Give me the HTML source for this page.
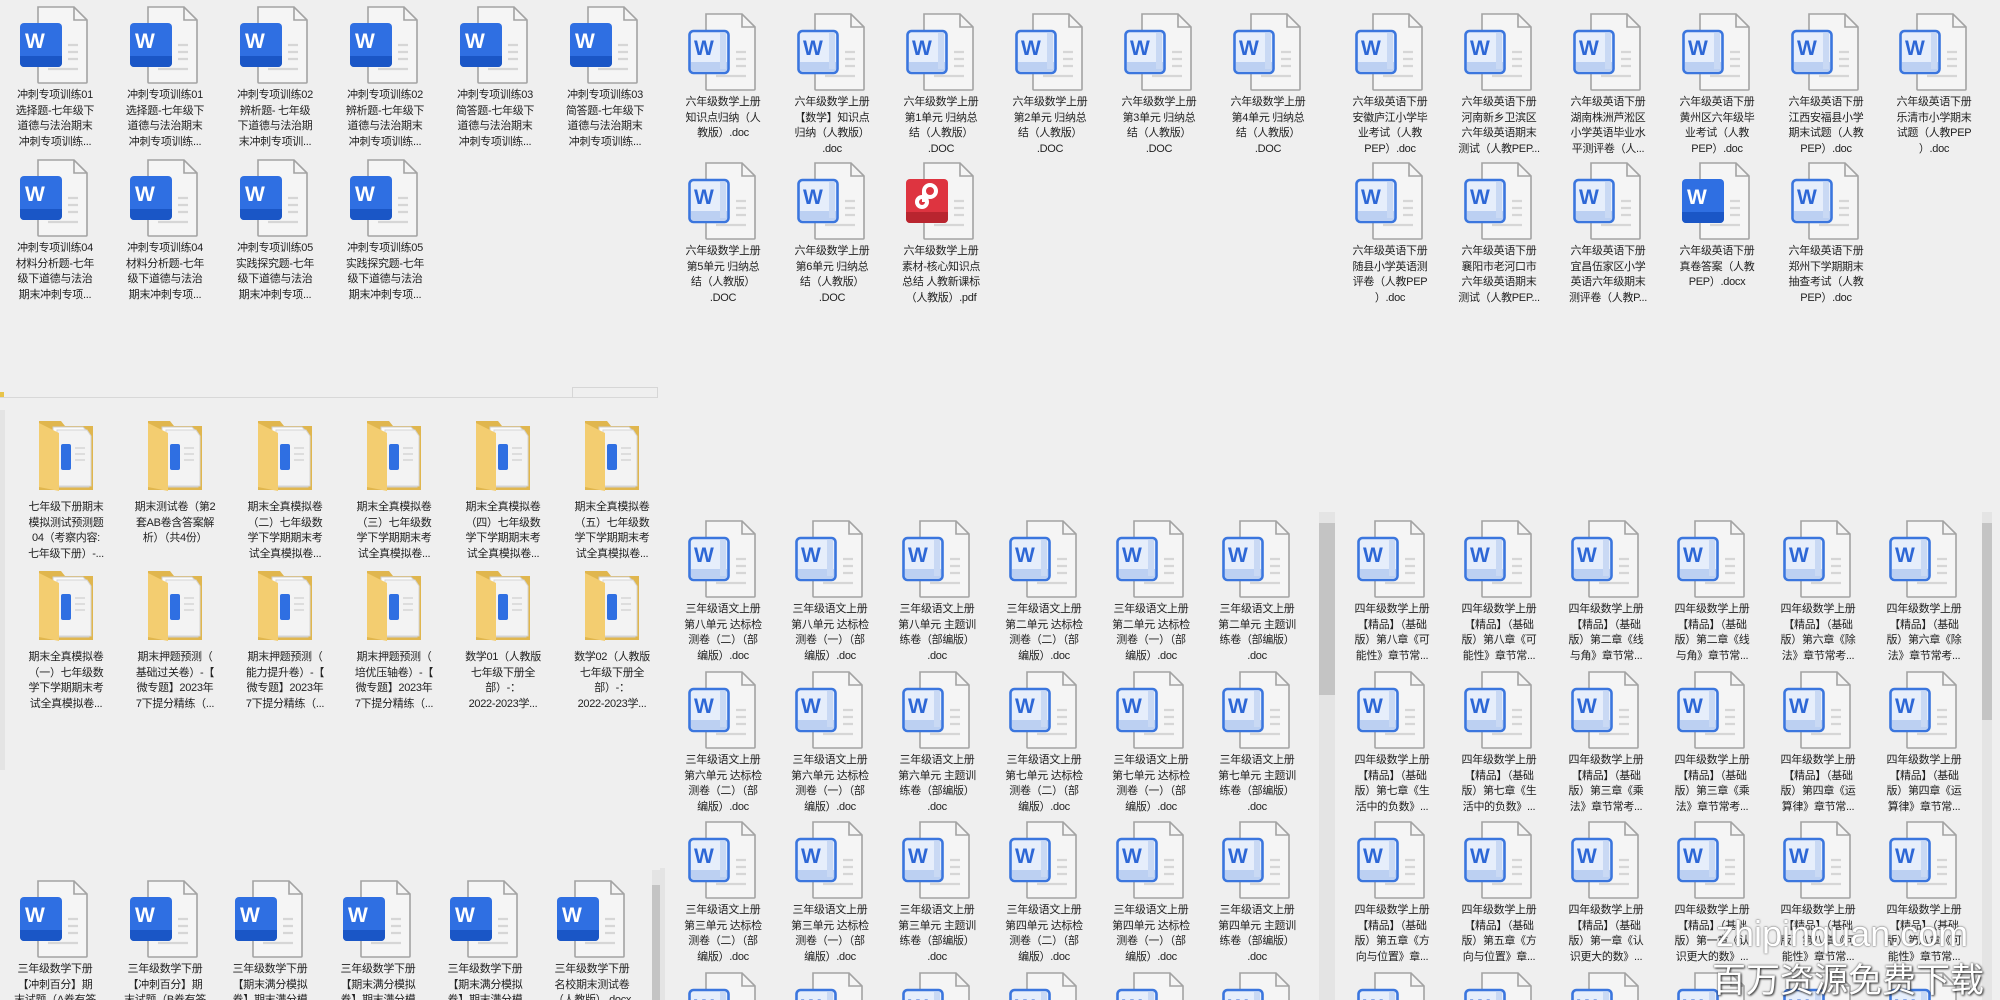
<!DOCTYPE html>
<html><head><meta charset="utf-8">
<style>
html{margin:0;padding:0;width:2000px;height:1000px;overflow:hidden}
body{margin:0;padding:0;width:2000px;height:1000px;overflow:hidden;background:#efefef;position:relative;font-family:"Liberation Sans","Noto Sans CJK SC",sans-serif}
.i{position:absolute;width:110px}
.i svg{display:block;width:70px;height:78px;margin:0 auto}
.i p{margin:4px 0 0;font-size:11px;letter-spacing:-0.3px;line-height:15.5px;text-align:center;color:#222;white-space:nowrap}
.sb{position:absolute;background:#e4e4e4}
.th{position:absolute;background:#c4c4c4}
.wm1{position:absolute;left:1716px;top:912px;font-size:36px;line-height:44px;color:#fff;white-space:nowrap;text-shadow:0 0 2px #777,0 0 1px #555}
.wm2{position:absolute;left:1712px;top:956px;font-size:34px;line-height:44px;color:#fff;white-space:nowrap;text-shadow:1px 1px 2px #333,0 0 2px #444;font-family:"Noto Sans CJK SC",sans-serif}
</style></head><body>
<svg width="0" height="0" style="position:absolute">
<defs>
<symbol id="doc" viewBox="0 0 70 78">
<path d="M18 1h36l13 13v62a1 1 0 0 1-1 1H19a1 1 0 0 1-1-1z" fill="#f5f5f5" stroke="#a3a3a3" stroke-width="1.6"/>
<path d="M54 1v13h13" fill="none" stroke="#a3a3a3" stroke-width="1.6"/>
<path d="M48 39h10M48 46h10M48 53h10M28 63h30" stroke="#d6d6d6" stroke-width="2.2"/>
</symbol>
<symbol id="ws" viewBox="0 0 70 78">
<use href="#doc"/>
<rect x="0" y="17" width="42" height="44" rx="4" fill="#2f6fe2"/>
<path d="M0 50h42v7a4 4 0 0 1-4 4H4a4 4 0 0 1-4-4z" fill="#1a56c6"/>
<text x="5" y="42" font-family="Liberation Sans" font-weight="bold" font-size="21" fill="#fff">W</text>
</symbol>
<symbol id="wo" viewBox="0 0 70 78">
<use href="#doc"/>
<rect x="1.5" y="18" width="39" height="42" rx="4" fill="#e6eefb" stroke="#3b76de" stroke-width="2.6"/>
<path d="M3 49h36v7a3 3 0 0 1-3 3H6a3 3 0 0 1-3-3z" fill="#bcd0f2"/>
<path d="M32 20h6v36h-6z" fill="#c9d9f4"/>
<text x="6" y="42" font-family="Liberation Sans" font-weight="bold" font-size="21" fill="#2d67d6">W</text>
</symbol>
<symbol id="pdf" viewBox="0 0 70 78">
<use href="#doc"/>
<rect x="0" y="17" width="42" height="44" rx="4" fill="#de3440"/>
<path d="M0 50h42v7a4 4 0 0 1-4 4H4a4 4 0 0 1-4-4z" fill="#b9252f"/>
<circle cx="24" cy="29" r="6" fill="none" stroke="#fff" stroke-width="4"/>
<circle cx="16" cy="40" r="5" fill="none" stroke="#fff" stroke-width="4"/>
<path d="M18 29v11" stroke="#fff" stroke-width="4"/>
</symbol>
<symbol id="fd" viewBox="0 0 70 78">
<path d="M8 3h22l4 5h28v64H8z" fill="#e0b64e"/>
<path d="M22 9h30l6 6v54H22z" fill="#fbfbfb" stroke="#cfcfcf"/>
<path d="M26 12h30l4 6v50H26z" fill="#f3f3f3" stroke="#d5d5d5"/>
<rect x="30" y="26" width="10" height="26" rx="2" fill="#2f6fe2"/>
<path d="M44 30h10M44 36h10M44 42h10" stroke="#ddd" stroke-width="2"/>
<path d="M8 5l20 10v58l-20-4z" fill="#f3cd70"/>
</symbol>
</defs></svg>

<!-- top-left panel -->
<div class="i" style="left:0;top:6px"><svg><use href="#ws"/></svg><p>冲刺专项训练01<br>选择题-七年级下<br>道德与法治期末<br>冲刺专项训练...</p></div>
<div class="i" style="left:110px;top:6px"><svg><use href="#ws"/></svg><p>冲刺专项训练01<br>选择题-七年级下<br>道德与法治期末<br>冲刺专项训练...</p></div>
<div class="i" style="left:220px;top:6px"><svg><use href="#ws"/></svg><p>冲刺专项训练02<br>辨析题- 七年级<br>下道德与法治期<br>末冲刺专项训...</p></div>
<div class="i" style="left:330px;top:6px"><svg><use href="#ws"/></svg><p>冲刺专项训练02<br>辨析题-七年级下<br>道德与法治期末<br>冲刺专项训练...</p></div>
<div class="i" style="left:440px;top:6px"><svg><use href="#ws"/></svg><p>冲刺专项训练03<br>简答题-七年级下<br>道德与法治期末<br>冲刺专项训练...</p></div>
<div class="i" style="left:550px;top:6px"><svg><use href="#ws"/></svg><p>冲刺专项训练03<br>简答题-七年级下<br>道德与法治期末<br>冲刺专项训练...</p></div>
<div class="i" style="left:0;top:159px"><svg><use href="#ws"/></svg><p>冲刺专项训练04<br>材料分析题-七年<br>级下道德与法治<br>期末冲刺专项...</p></div>
<div class="i" style="left:110px;top:159px"><svg><use href="#ws"/></svg><p>冲刺专项训练04<br>材料分析题-七年<br>级下道德与法治<br>期末冲刺专项...</p></div>
<div class="i" style="left:220px;top:159px"><svg><use href="#ws"/></svg><p>冲刺专项训练05<br>实践探究题-七年<br>级下道德与法治<br>期末冲刺专项...</p></div>
<div class="i" style="left:330px;top:159px"><svg><use href="#ws"/></svg><p>冲刺专项训练05<br>实践探究题-七年<br>级下道德与法治<br>期末冲刺专项...</p></div>

<!-- top-middle panel -->
<div class="i" style="left:668px;top:13px"><svg><use href="#wo"/></svg><p>六年级数学上册<br>知识点归纳（人<br>教版）.doc</p></div>
<div class="i" style="left:777px;top:13px"><svg><use href="#wo"/></svg><p>六年级数学上册<br>【数学】知识点<br>归纳（人教版）<br>.doc</p></div>
<div class="i" style="left:886px;top:13px"><svg><use href="#wo"/></svg><p>六年级数学上册<br>第1单元 归纳总<br>结（人教版）<br>.DOC</p></div>
<div class="i" style="left:995px;top:13px"><svg><use href="#wo"/></svg><p>六年级数学上册<br>第2单元 归纳总<br>结（人教版）<br>.DOC</p></div>
<div class="i" style="left:1104px;top:13px"><svg><use href="#wo"/></svg><p>六年级数学上册<br>第3单元 归纳总<br>结（人教版）<br>.DOC</p></div>
<div class="i" style="left:1213px;top:13px"><svg><use href="#wo"/></svg><p>六年级数学上册<br>第4单元 归纳总<br>结（人教版）<br>.DOC</p></div>
<div class="i" style="left:668px;top:162px"><svg><use href="#wo"/></svg><p>六年级数学上册<br>第5单元 归纳总<br>结（人教版）<br>.DOC</p></div>
<div class="i" style="left:777px;top:162px"><svg><use href="#wo"/></svg><p>六年级数学上册<br>第6单元 归纳总<br>结（人教版）<br>.DOC</p></div>
<div class="i" style="left:886px;top:162px"><svg><use href="#pdf"/></svg><p>六年级数学上册<br>素材-核心知识点<br>总结 人教新课标<br>（人教版）.pdf</p></div>

<!-- top-right panel -->
<div class="i" style="left:1335px;top:13px"><svg><use href="#wo"/></svg><p>六年级英语下册<br>安徽庐江小学毕<br>业考试（人教<br>PEP）.doc</p></div>
<div class="i" style="left:1444px;top:13px"><svg><use href="#wo"/></svg><p>六年级英语下册<br>河南新乡卫滨区<br>六年级英语期末<br>测试（人教PEP...</p></div>
<div class="i" style="left:1553px;top:13px"><svg><use href="#wo"/></svg><p>六年级英语下册<br>湖南株洲芦淞区<br>小学英语毕业水<br>平测评卷（人...</p></div>
<div class="i" style="left:1662px;top:13px"><svg><use href="#wo"/></svg><p>六年级英语下册<br>黄州区六年级毕<br>业考试（人教<br>PEP）.doc</p></div>
<div class="i" style="left:1771px;top:13px"><svg><use href="#wo"/></svg><p>六年级英语下册<br>江西安福县小学<br>期末试题（人教<br>PEP）.doc</p></div>
<div class="i" style="left:1879px;top:13px"><svg><use href="#wo"/></svg><p>六年级英语下册<br>乐清市小学期末<br>试题（人教PEP<br>）.doc</p></div>
<div class="i" style="left:1335px;top:162px"><svg><use href="#wo"/></svg><p>六年级英语下册<br>随县小学英语测<br>评卷（人教PEP<br>）.doc</p></div>
<div class="i" style="left:1444px;top:162px"><svg><use href="#wo"/></svg><p>六年级英语下册<br>襄阳市老河口市<br>六年级英语期末<br>测试（人教PEP...</p></div>
<div class="i" style="left:1553px;top:162px"><svg><use href="#wo"/></svg><p>六年级英语下册<br>宜昌伍家区小学<br>英语六年级期末<br>测评卷（人教P...</p></div>
<div class="i" style="left:1662px;top:162px"><svg><use href="#ws"/></svg><p>六年级英语下册<br>真卷答案（人教<br>PEP）.docx</p></div>
<div class="i" style="left:1771px;top:162px"><svg><use href="#wo"/></svg><p>六年级英语下册<br>郑州下学期期末<br>抽查考试（人教<br>PEP）.doc</p></div>

<!-- separator toolbar remnants -->
<div style="position:absolute;left:0;top:397px;width:658px;height:1px;background:#d8d8d8"></div>
<div style="position:absolute;left:0;top:392px;width:4px;height:5px;background:#e8c44a"></div>
<div style="position:absolute;left:572px;top:387px;width:84px;height:10px;border:1px solid #d6d6d6;border-bottom:none"></div>
<div class="sb" style="left:0;top:410px;width:5px;height:360px"></div>

<!-- folders panel -->
<div class="i" style="left:11px;top:418px"><svg><use href="#fd"/></svg><p>七年级下册期末<br>模拟测试预测题<br>04（考察内容:<br>七年级下册）-...</p></div>
<div class="i" style="left:120px;top:418px"><svg><use href="#fd"/></svg><p>期末测试卷（第2<br>套AB卷含答案解<br>析）（共4份）</p></div>
<div class="i" style="left:230px;top:418px"><svg><use href="#fd"/></svg><p>期末全真模拟卷<br>（二）七年级数<br>学下学期期末考<br>试全真模拟卷...</p></div>
<div class="i" style="left:339px;top:418px"><svg><use href="#fd"/></svg><p>期末全真模拟卷<br>（三）七年级数<br>学下学期期末考<br>试全真模拟卷...</p></div>
<div class="i" style="left:448px;top:418px"><svg><use href="#fd"/></svg><p>期末全真模拟卷<br>（四）七年级数<br>学下学期期末考<br>试全真模拟卷...</p></div>
<div class="i" style="left:557px;top:418px"><svg><use href="#fd"/></svg><p>期末全真模拟卷<br>（五）七年级数<br>学下学期期末考<br>试全真模拟卷...</p></div>
<div class="i" style="left:11px;top:568px"><svg><use href="#fd"/></svg><p>期末全真模拟卷<br>（一）七年级数<br>学下学期期末考<br>试全真模拟卷...</p></div>
<div class="i" style="left:120px;top:568px"><svg><use href="#fd"/></svg><p>期末押题预测（<br>基础过关卷）-【<br>微专题】2023年<br>7下提分精练（...</p></div>
<div class="i" style="left:230px;top:568px"><svg><use href="#fd"/></svg><p>期末押题预测（<br>能力提升卷）-【<br>微专题】2023年<br>7下提分精练（...</p></div>
<div class="i" style="left:339px;top:568px"><svg><use href="#fd"/></svg><p>期末押题预测（<br>培优压轴卷）-【<br>微专题】2023年<br>7下提分精练（...</p></div>
<div class="i" style="left:448px;top:568px"><svg><use href="#fd"/></svg><p>数学01（人教版<br>七年级下册全<br>部）-：<br>2022-2023学...</p></div>
<div class="i" style="left:557px;top:568px"><svg><use href="#fd"/></svg><p>数学02（人教版<br>七年级下册全<br>部）-：<br>2022-2023学...</p></div>

<!-- bottom-left panel -->
<div class="sb" style="left:652px;top:870px;width:8px;height:130px"></div>
<div class="th" style="left:652px;top:885px;width:8px;height:115px"></div>
<div class="i" style="left:0;top:880px"><svg><use href="#ws"/></svg><p>三年级数学下册<br>【冲刺百分】期<br>末试题（A卷有答</p></div>
<div class="i" style="left:110px;top:880px"><svg><use href="#ws"/></svg><p>三年级数学下册<br>【冲刺百分】期<br>末试题（B卷有答</p></div>
<div class="i" style="left:215px;top:880px"><svg><use href="#ws"/></svg><p>三年级数学下册<br>【期末满分模拟<br>卷】期末满分模</p></div>
<div class="i" style="left:323px;top:880px"><svg><use href="#ws"/></svg><p>三年级数学下册<br>【期末满分模拟<br>卷】期末满分模</p></div>
<div class="i" style="left:430px;top:880px"><svg><use href="#ws"/></svg><p>三年级数学下册<br>【期末满分模拟<br>卷】期末满分模</p></div>
<div class="i" style="left:537px;top:880px"><svg><use href="#ws"/></svg><p>三年级数学下册<br>名校期末测试卷<br>（人教版）.docx</p></div>

<!-- middle-center panel -->
<div class="sb" style="left:1319px;top:512px;width:9px;height:488px"></div>
<div class="th" style="left:1319px;top:523px;width:9px;height:172px"></div>
<div class="sb" style="left:660px;top:868px;width:5px;height:132px"></div>
<div class="i" style="left:668px;top:520px"><svg><use href="#wo"/></svg><p>三年级语文上册<br>第八单元 达标检<br>测卷（二）（部<br>编版）.doc</p></div>
<div class="i" style="left:775px;top:520px"><svg><use href="#wo"/></svg><p>三年级语文上册<br>第八单元 达标检<br>测卷（一）（部<br>编版）.doc</p></div>
<div class="i" style="left:882px;top:520px"><svg><use href="#wo"/></svg><p>三年级语文上册<br>第八单元 主题训<br>练卷（部编版）<br>.doc</p></div>
<div class="i" style="left:989px;top:520px"><svg><use href="#wo"/></svg><p>三年级语文上册<br>第二单元 达标检<br>测卷（二）（部<br>编版）.doc</p></div>
<div class="i" style="left:1096px;top:520px"><svg><use href="#wo"/></svg><p>三年级语文上册<br>第二单元 达标检<br>测卷（一）（部<br>编版）.doc</p></div>
<div class="i" style="left:1202px;top:520px"><svg><use href="#wo"/></svg><p>三年级语文上册<br>第二单元 主题训<br>练卷（部编版）<br>.doc</p></div>
<div class="i" style="left:668px;top:671px"><svg><use href="#wo"/></svg><p>三年级语文上册<br>第六单元 达标检<br>测卷（二）（部<br>编版）.doc</p></div>
<div class="i" style="left:775px;top:671px"><svg><use href="#wo"/></svg><p>三年级语文上册<br>第六单元 达标检<br>测卷（一）（部<br>编版）.doc</p></div>
<div class="i" style="left:882px;top:671px"><svg><use href="#wo"/></svg><p>三年级语文上册<br>第六单元 主题训<br>练卷（部编版）<br>.doc</p></div>
<div class="i" style="left:989px;top:671px"><svg><use href="#wo"/></svg><p>三年级语文上册<br>第七单元 达标检<br>测卷（二）（部<br>编版）.doc</p></div>
<div class="i" style="left:1096px;top:671px"><svg><use href="#wo"/></svg><p>三年级语文上册<br>第七单元 达标检<br>测卷（一）（部<br>编版）.doc</p></div>
<div class="i" style="left:1202px;top:671px"><svg><use href="#wo"/></svg><p>三年级语文上册<br>第七单元 主题训<br>练卷（部编版）<br>.doc</p></div>
<div class="i" style="left:668px;top:821px"><svg><use href="#wo"/></svg><p>三年级语文上册<br>第三单元 达标检<br>测卷（二）（部<br>编版）.doc</p></div>
<div class="i" style="left:775px;top:821px"><svg><use href="#wo"/></svg><p>三年级语文上册<br>第三单元 达标检<br>测卷（一）（部<br>编版）.doc</p></div>
<div class="i" style="left:882px;top:821px"><svg><use href="#wo"/></svg><p>三年级语文上册<br>第三单元 主题训<br>练卷（部编版）<br>.doc</p></div>
<div class="i" style="left:989px;top:821px"><svg><use href="#wo"/></svg><p>三年级语文上册<br>第四单元 达标检<br>测卷（二）（部<br>编版）.doc</p></div>
<div class="i" style="left:1096px;top:821px"><svg><use href="#wo"/></svg><p>三年级语文上册<br>第四单元 达标检<br>测卷（一）（部<br>编版）.doc</p></div>
<div class="i" style="left:1202px;top:821px"><svg><use href="#wo"/></svg><p>三年级语文上册<br>第四单元 主题训<br>练卷（部编版）<br>.doc</p></div>
<div class="i" style="left:668px;top:972px"><svg><use href="#wo"/></svg></div>
<div class="i" style="left:775px;top:972px"><svg><use href="#wo"/></svg></div>
<div class="i" style="left:882px;top:972px"><svg><use href="#wo"/></svg></div>
<div class="i" style="left:989px;top:972px"><svg><use href="#wo"/></svg></div>
<div class="i" style="left:1096px;top:972px"><svg><use href="#wo"/></svg></div>
<div class="i" style="left:1202px;top:972px"><svg><use href="#wo"/></svg></div>

<!-- middle-right panel -->
<div class="sb" style="left:1328px;top:512px;width:7px;height:488px"></div>
<div class="th" style="left:1328px;top:523px;width:7px;height:172px"></div>
<div class="sb" style="left:1982px;top:512px;width:10px;height:488px"></div>
<div class="th" style="left:1982px;top:523px;width:10px;height:197px"></div>
<div class="i" style="left:1337px;top:520px"><svg><use href="#wo"/></svg><p>四年级数学上册<br>【精品】（基础<br>版）第八章《可<br>能性》章节常...</p></div>
<div class="i" style="left:1444px;top:520px"><svg><use href="#wo"/></svg><p>四年级数学上册<br>【精品】（基础<br>版）第八章《可<br>能性》章节常...</p></div>
<div class="i" style="left:1551px;top:520px"><svg><use href="#wo"/></svg><p>四年级数学上册<br>【精品】（基础<br>版）第二章《线<br>与角》章节常...</p></div>
<div class="i" style="left:1657px;top:520px"><svg><use href="#wo"/></svg><p>四年级数学上册<br>【精品】（基础<br>版）第二章《线<br>与角》章节常...</p></div>
<div class="i" style="left:1763px;top:520px"><svg><use href="#wo"/></svg><p>四年级数学上册<br>【精品】（基础<br>版）第六章《除<br>法》章节常考...</p></div>
<div class="i" style="left:1869px;top:520px"><svg><use href="#wo"/></svg><p>四年级数学上册<br>【精品】（基础<br>版）第六章《除<br>法》章节常考...</p></div>
<div class="i" style="left:1337px;top:671px"><svg><use href="#wo"/></svg><p>四年级数学上册<br>【精品】（基础<br>版）第七章《生<br>活中的负数》...</p></div>
<div class="i" style="left:1444px;top:671px"><svg><use href="#wo"/></svg><p>四年级数学上册<br>【精品】（基础<br>版）第七章《生<br>活中的负数》...</p></div>
<div class="i" style="left:1551px;top:671px"><svg><use href="#wo"/></svg><p>四年级数学上册<br>【精品】（基础<br>版）第三章《乘<br>法》章节常考...</p></div>
<div class="i" style="left:1657px;top:671px"><svg><use href="#wo"/></svg><p>四年级数学上册<br>【精品】（基础<br>版）第三章《乘<br>法》章节常考...</p></div>
<div class="i" style="left:1763px;top:671px"><svg><use href="#wo"/></svg><p>四年级数学上册<br>【精品】（基础<br>版）第四章《运<br>算律》章节常...</p></div>
<div class="i" style="left:1869px;top:671px"><svg><use href="#wo"/></svg><p>四年级数学上册<br>【精品】（基础<br>版）第四章《运<br>算律》章节常...</p></div>
<div class="i" style="left:1337px;top:821px"><svg><use href="#wo"/></svg><p>四年级数学上册<br>【精品】（基础<br>版）第五章《方<br>向与位置》章...</p></div>
<div class="i" style="left:1444px;top:821px"><svg><use href="#wo"/></svg><p>四年级数学上册<br>【精品】（基础<br>版）第五章《方<br>向与位置》章...</p></div>
<div class="i" style="left:1551px;top:821px"><svg><use href="#wo"/></svg><p>四年级数学上册<br>【精品】（基础<br>版）第一章《认<br>识更大的数》...</p></div>
<div class="i" style="left:1657px;top:821px"><svg><use href="#wo"/></svg><p>四年级数学上册<br>【精品】（基础<br>版）第一章《认<br>识更大的数》...</p></div>
<div class="i" style="left:1763px;top:821px"><svg><use href="#wo"/></svg><p>四年级数学上册<br>【精品】（基础<br>版）第八章《可<br>能性》章节常...</p></div>
<div class="i" style="left:1869px;top:821px"><svg><use href="#wo"/></svg><p>四年级数学上册<br>【精品】（基础<br>版）第八章《可<br>能性》章节常...</p></div>
<div class="i" style="left:1337px;top:972px"><svg><use href="#wo"/></svg></div>
<div class="i" style="left:1444px;top:972px"><svg><use href="#wo"/></svg></div>
<div class="i" style="left:1551px;top:972px"><svg><use href="#wo"/></svg></div>
<div class="i" style="left:1657px;top:972px"><svg><use href="#wo"/></svg></div>
<div class="i" style="left:1763px;top:972px"><svg><use href="#wo"/></svg></div>
<div class="i" style="left:1869px;top:972px"><svg><use href="#wo"/></svg></div>

<div class="wm1">zhipinquan.com</div>
<div class="wm2">百万资源免费下载</div>
</body></html>
